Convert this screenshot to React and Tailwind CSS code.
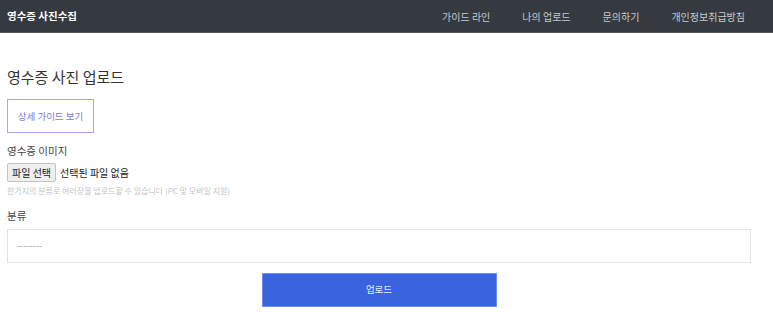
export default function App() {
  const nav = ['가이드 라인', '나의 업로드', '문의하기', '개인정보취급방침'];
  return (
    <div className="min-h-[323px] bg-white text-[#333]" style={{ fontFamily: '"Noto Sans CJK KR", "Noto Sans", sans-serif' }}>
      {/* Navbar */}
      <nav className="flex h-[33px] items-center justify-between bg-[#343a40] px-[7px] border-b border-[#55595e]">
        <span className="text-[10.5px] font-bold text-white">영수증 사진수집</span>
        <ul className="flex items-center gap-[32px] pr-[21px] text-[10px] text-[#c9cacc]">
          {nav.map((n) => (
            <li key={n}>{n}</li>
          ))}
        </ul>
      </nav>

      <main className="px-[7px] pr-[22px]">
        <h2 className="mt-[34px] text-[15px] leading-[20px] text-[#333]">영수증 사진 업로드</h2>

        <button className="mt-[12px] h-[34px] w-[87px] border border-[#a9a6f0] text-[9.5px] text-[#7c79d8]">
          상세 가이드 보기
        </button>

        <div className="mt-[10px] text-[10.5px] text-[#444]">영수증 이미지</div>
        <div className="mt-[4px] flex items-center gap-[4px] text-[10px]">
          <span className="rounded-[2px] border border-[#c2c2c2] bg-[#efefef] px-[4px] py-[1px] text-[#222]">파일 선택</span>
          <span className="text-[#222]">선택된 파일 없음</span>
        </div>
        <div className="mt-[2px] text-[8px] leading-[14px] text-[#c4c4c4]">
          한가지의 분류로 여러장을 업로드할 수 있습니다 (PC 및 모바일 지원)
        </div>

        <div className="mt-[10px] text-[10.5px] text-[#444]">분류</div>
        <div className="mt-[5px] flex h-[34px] items-center border border-[#e3e3e3] px-[9px] text-[9px] text-[#9a9a9a]">
          --------
        </div>

        <div className="mt-[10px] flex justify-center">
          <button className="h-[34px] w-[235px] border border-[#6e8cf0] bg-[#3a63e0] text-[9.5px] text-[#e6ebff]">
            업로드
          </button>
        </div>
      </main>
    </div>
  );
}
